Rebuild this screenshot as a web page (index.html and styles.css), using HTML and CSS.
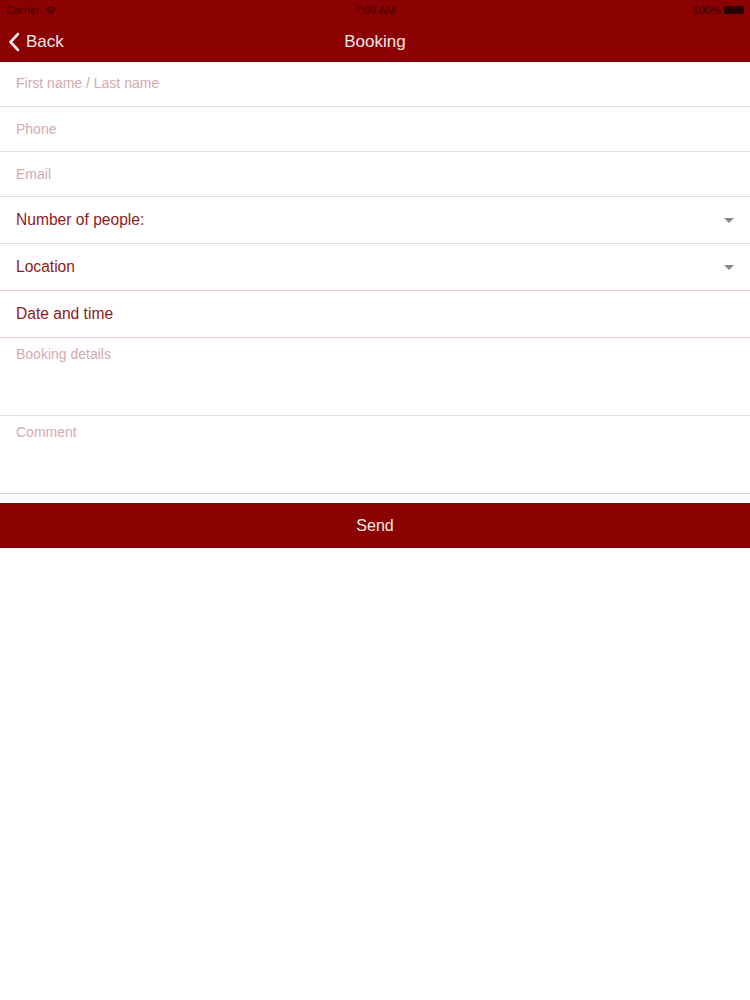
FILE: index.html
```html
<!DOCTYPE html>
<html lang="en">
<head>
    <meta charset="UTF-8">
    <meta name="viewport" content="width=device-width, initial-scale=1.0">
    <title>Booking</title>
    <link rel="stylesheet" href="styles.css">
</head>
<body>
    <header class="topbar">
        <div class="status-bar">
            <span class="carrier">Carrier
                <svg class="wifi" width="12" height="9" viewBox="0 0 12 9">
                    <path d="M6 8.6 L4.2 6.6 A2.6 2.6 0 0 1 7.8 6.6 Z" fill="currentColor"/>
                    <path d="M2.6 5 A4.9 4.9 0 0 1 9.4 5 L8.5 5.9 A3.6 3.6 0 0 0 3.5 5.9 Z" fill="currentColor"/>
                    <path d="M0.6 3 A7.8 7.8 0 0 1 11.4 3 L10.5 3.9 A6.5 6.5 0 0 0 1.5 3.9 Z" fill="currentColor"/>
                </svg>
            </span>
            <span class="clock">7:09 AM</span>
            <span class="battery">100%
                <span class="battery-body"></span>
            </span>
        </div>
        <nav class="nav-bar">
            <a class="back" href="#">
                <svg width="12" height="20" viewBox="0 0 12 20">
                    <path d="M10 2 L2.5 10 L10 18" fill="none" stroke="currentColor" stroke-width="2.6" stroke-linecap="round" stroke-linejoin="round"/>
                </svg>
                Back
            </a>
            <h1 class="title">Booking</h1>
        </nav>
    </header>

    <form class="booking-form">
        <div class="field"><span class="placeholder">First name / Last name</span></div>
        <div class="field"><span class="placeholder">Phone</span></div>
        <div class="field"><span class="placeholder">Email</span></div>
        <div class="field select">
            <span class="label">Number of people:</span>
            <span class="caret"></span>
        </div>
        <div class="field select pink">
            <span class="label">Location</span>
            <span class="caret"></span>
        </div>
        <div class="field select pink">
            <span class="label">Date and time</span>
        </div>
        <div class="field area"><span class="placeholder">Booking details</span></div>
        <div class="field area pink"><span class="placeholder">Comment</span></div>
        <button class="send" type="button">Send</button>
    </form>
</body>
</html>
```

FILE: styles.css
```css
body {
    margin: 0;
    font-family: "Liberation Sans", Arial, sans-serif;
    background: #fff;
    width: 750px;
}

.topbar {
    background: #8b0000;
    height: 62px;
}

.status-bar {
    height: 20px;
    display: flex;
    align-items: center;
    justify-content: space-between;
    padding: 0 6px;
    font-size: 11px;
    color: #3c0000;
    position: relative;
}

.carrier {
    display: flex;
    align-items: center;
    gap: 5px;
}

.clock {
    position: absolute;
    left: 0;
    right: 0;
    text-align: center;
}

.battery {
    display: flex;
    align-items: center;
    gap: 3px;
}

.battery-body {
    display: inline-block;
    width: 20px;
    height: 8px;
    background: #2a0000;
    border-radius: 1px;
}

.nav-bar {
    height: 42px;
    display: flex;
    align-items: center;
    position: relative;
    color: #fff;
    padding-top: 2px;
    box-sizing: border-box;
}

.back {
    display: flex;
    align-items: center;
    gap: 6px;
    color: #f4e6e6;
    text-decoration: none;
    font-size: 17px;
    padding-left: 8px;
    z-index: 1;
}

.title {
    position: absolute;
    left: 0;
    right: 0;
    margin: 0;
    text-align: center;
    font-size: 17px;
    font-weight: normal;
    color: #f4e6e6;
}

.booking-form {
    display: flex;
    flex-direction: column;
}

.field {
    height: 44px;
    border-bottom: 1px solid #dedede;
    display: flex;
    align-items: center;
    padding: 0 16px;
}

.field:first-child {
    padding-bottom: 2px;
    box-sizing: border-box;
    height: 45px;
}

.field.select {
    height: 46px;
    justify-content: space-between;
}

.field.pink {
    border-bottom-color: #f2cdd1;
}

.field.area {
    align-items: flex-start;
    padding-top: 8px;
    box-sizing: border-box;
    height: 78px;
}

.placeholder {
    font-size: 14px;
    color: #d5a9b0;
}

.label {
    font-size: 15.6px;
    color: #8e1b1b;
}

.caret {
    width: 0;
    height: 0;
    border-left: 5px solid transparent;
    border-right: 5px solid transparent;
    border-top: 5px solid #8a8a8a;
}

.send {
    margin-top: 9px;
    height: 45px;
    border: none;
    background: #8b0000;
    color: #f6e8e8;
    font-family: "Liberation Sans", Arial, sans-serif;
    font-size: 16px;
    padding-top: 2px;
}
```
